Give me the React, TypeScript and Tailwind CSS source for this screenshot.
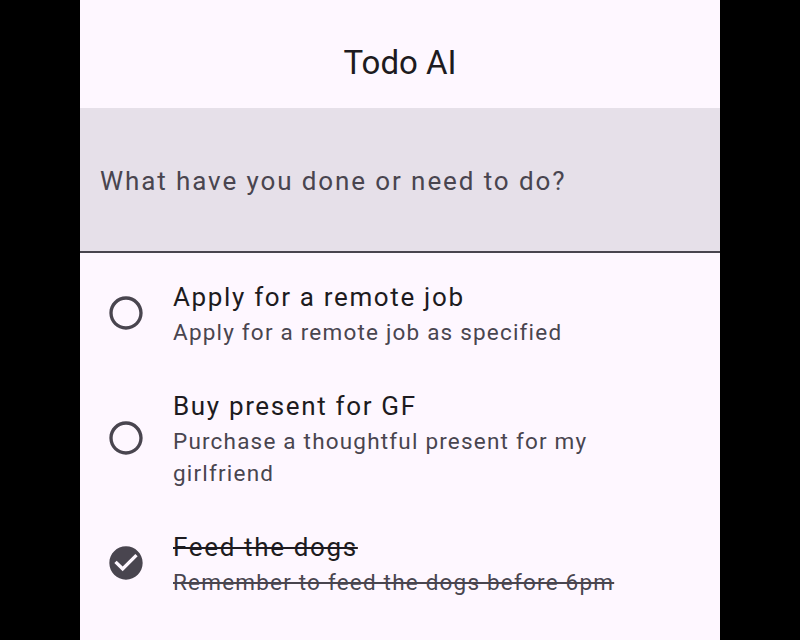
import React from "react";

type Todo = { title: string; subtitle: string; done: boolean };

const todos: Todo[] = [
  { title: "Apply for a remote job", subtitle: "Apply for a remote job as specified", done: false },
  { title: "Buy present for GF", subtitle: "Purchase a thoughtful present for my girlfriend", done: false },
  { title: "Feed the dogs", subtitle: "Remember to feed the dogs before 6pm", done: true },
];

function Unchecked() {
  return (
    <svg width="40" height="40" viewBox="0 0 24 24" fill="#49454F">
      <path d="M12 2C6.48 2 2 6.48 2 12s4.48 10 10 10 10-4.48 10-10S17.52 2 12 2zm0 18c-4.42 0-8-3.58-8-8s3.58-8 8-8 8 3.58 8 8-3.58 8-8 8z" />
    </svg>
  );
}

function Checked() {
  return (
    <svg width="40" height="40" viewBox="0 0 24 24" fill="#49454F">
      <path d="M12 2C6.48 2 2 6.48 2 12s4.48 10 10 10 10-4.48 10-10S17.52 2 12 2zm-2 15l-5-5 1.41-1.41L10 14.17l7.59-7.59L19 8l-9 9z" />
    </svg>
  );
}

export default function App() {
  return (
    <div className="w-[800px] h-[640px] bg-black flex justify-center overflow-hidden" style={{ fontFamily: "Roboto, 'Noto Sans', sans-serif" }}>
      <div className="w-[640px] h-full bg-[#FEF7FF] flex flex-col">
        <header className="h-[108px] flex items-center justify-center shrink-0 pt-[17px]">
          <h1 className="text-[33px] leading-none text-[#1D1B20] font-normal">Todo AI</h1>
        </header>
        <div className="h-[145px] shrink-0 bg-[#E6E0E9] border-b-[2px] border-[#49454F] flex items-center px-[20px] pt-[2px]">
          <span className="text-[26px] tracking-[1.9px] text-[#49454F] leading-none">What have you done or need to do?</span>
        </div>
        <ul className="pt-[5px] flex flex-col">
          {todos.map((t) => (
            <li key={t.title} className="flex items-center py-[19.5px] pl-[26px] pr-[27px]">
              <div className="shrink-0 w-[40px] h-[40px]">{t.done ? <Checked /> : <Unchecked />}</div>
              <div className="ml-[27px] flex flex-col min-w-0 max-w-[470px]">
                <span className={`text-[26px] leading-[38px] tracking-[1.65px] text-[#1D1B20] ${t.done ? "line-through decoration-2" : ""}`}>
                  {t.title}
                </span>
                <span className={`text-[22.5px] leading-[32px] tracking-[1.2px] text-[#49454F] ${t.done ? "line-through decoration-2" : ""}`}>
                  {t.subtitle}
                </span>
              </div>
            </li>
          ))}
        </ul>
      </div>
    </div>
  );
}
